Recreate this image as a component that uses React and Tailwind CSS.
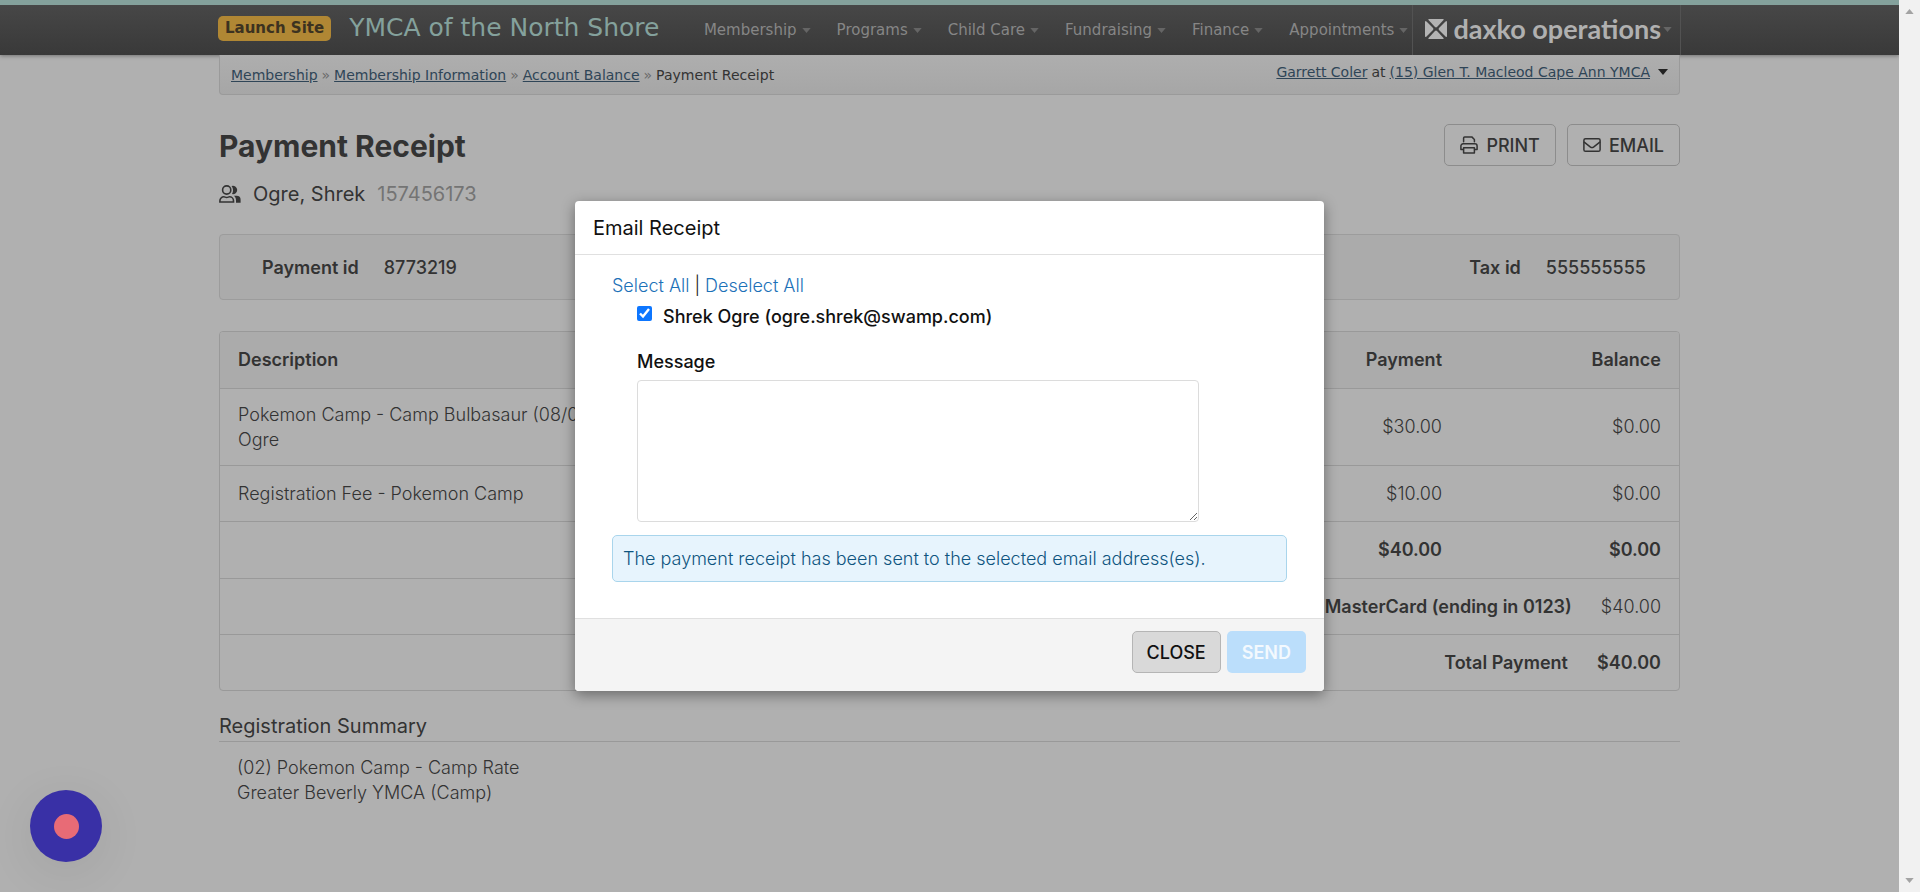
import React from "react";

const NAV = ["Membership", "Programs", "Child Care", "Fundraising", "Finance", "Appointments"];
const CRUMBS = ["Membership", "Membership Information", "Account Balance"];

function Caret({ className }) {
  return (
    <svg viewBox="0 0 10 6" className={className} aria-hidden="true">
      <path d="M0 0h10L5 6z" fill="currentColor" />
    </svg>
  );
}

function DaxkoMark() {
  return (
    <svg viewBox="0 0 22 20" className="h-5 w-[22px] shrink-0" fill="#b3b3b3" aria-hidden="true">
      <path d="M4 0h14q1.200 0 .5 1L12 8q-1 .9-2 0L3.500 1Q2.800 0 4 0z" />
      <path d="M4 20h14q1.200 0 .5-1L12 12q-1-.9-2 0l-6.500 7q-.7 1 .5 1z" />
      <path d="M0 3.200Q0 1.200 1.500 2.600L8 9q.9 1 0 2l-6.500 6.400Q0 18.800 0 16.800z" />
      <path d="M22 3.200q0-2-1.500-.6L14 9q-.9 1 0 2l6.500 6.400q1.500 1.400 1.500-.6z" />
    </svg>
  );
}

function PrintIcon() {
  return (
    <svg viewBox="0 0 18 18" className="size-[18px]" fill="none" stroke="currentColor" strokeWidth="1.500" strokeLinejoin="round" strokeLinecap="round" aria-hidden="true">
      <path d="M3.600 5.800V1.900a1 1 0 0 1 1-1h7.200l2.600 2.600v2.300" />
      <path d="M3.400 13.500H.9V10a2.200 2.200 0 0 1 2.200-2.200h11.800a2.200 2.200 0 0 1 2.200 2.200v3.500h-2.500" />
      <path d="M3.600 11.800h10.800v5.300H3.600z" />
    </svg>
  );
}

function EnvelopeIcon() {
  return (
    <svg viewBox="0 0 18 18" className="size-[18px]" fill="none" stroke="currentColor" strokeWidth="1.500" strokeLinejoin="round" strokeLinecap="round" aria-hidden="true">
      <rect x=".9" y="2.700" width="16.200" height="12.600" rx="1.600" />
      <path d="M1.200 6.200l6.300 4.900q1.500 1 3 0l6.300-4.900" />
    </svg>
  );
}

function PeopleIcon() {
  return (
    <svg viewBox="0 0 22 18" className="h-[18px] w-[22px]" aria-hidden="true">
      <circle cx="7.700" cy="5" r="4.100" fill="none" stroke="currentColor" strokeWidth="1.600" />
      <path d="M.9 17v-1.200a4 4 0 0 1 4-4c1 0 1.500.7 2.800.7s1.800-.7 2.800-.7a4 4 0 0 1 4 4V17z" fill="none" stroke="currentColor" strokeWidth="1.600" />
      <path d="M12.500 1a4.200 4.200 0 1 1 .5 8c1.500-2.400 1.300-5.700-.5-8zM15 10.800h2.600a4 4 0 0 1 4 4v3h-4.600v-2.200c0-2-.7-3.700-2-4.800z" fill="currentColor" />
    </svg>
  );
}

function Header() {
  return (
    <header className="border-t-[5px] border-[#84a19c] bg-linear-to-b from-[#474747] to-[#393939] font-['DejaVu_Sans',sans-serif] shadow-[0_1px_4px_rgba(0,0,0,0.35)]">
      <div className="mx-auto flex h-[50px] w-full max-w-[1463px] items-stretch justify-between">
        <div className="flex items-center pb-1">
          <a href="#launch" className="rounded-[5px] bg-[#b08734] px-[7px] text-[15px] leading-[25px] font-bold text-[#3c3220]">
            Launch Site
          </a>
          <span className="ml-[18px] text-[25px] leading-8 text-[#84a19c]">YMCA of the North Shore</span>
        </div>
        <div className="flex items-stretch">
          <nav className="flex items-center text-[15px] text-[#868686]">
            {NAV.map((n) => (
              <a key={n} href={"#" + n} className="flex items-center gap-[5px] pr-1 pl-[22px] first:pl-0">
                {n}
                <Caret className="h-[5px] w-[9px] text-[#656565]" />
              </a>
            ))}
          </nav>
          <a href="#operations" className="flex items-center border-x border-[#525252] pr-2 pb-[2px] pl-3 font-[Lato,sans-serif] text-[27px] font-bold text-[#b0b0b0]">
            <DaxkoMark />
            <span className="ml-[6px] leading-8">daxko operations</span>
            <Caret className="ml-[2px] h-[5px] w-[9px] text-[#656565]" />
          </a>
        </div>
      </div>
    </header>
  );
}

function CrumbBar() {
  return (
    <div className="flex h-10 items-start justify-between rounded-b-[4px] border border-t-0 border-[#9a9a9a] bg-linear-to-b from-[#aeaeae] to-[#a6a6a6] px-[11px] font-['DejaVu_Sans',sans-serif] text-[14px] leading-5 text-[#333]">
      <nav aria-label="Breadcrumb" className="flex gap-1 pt-[10px]">
        {CRUMBS.map((c) => (
          <React.Fragment key={c}>
            <a href={"#" + c} className="text-[#2f4557] underline">{c}</a>
            <span className="text-[#6a6a6a]">»</span>
          </React.Fragment>
        ))}
        <span>Payment Receipt</span>
      </nav>
      <div className="flex items-center gap-1 pt-[7px]">
        <a href="#user" className="text-[#2f4557] underline">Garrett Coler</a>
        <span>at</span>
        <a href="#branch" className="text-[#2f4557] underline">(15) Glen T. Macleod Cape Ann YMCA</a>
        <Caret className="ml-1 h-[6px] w-[10px] text-[#222]" />
      </div>
    </div>
  );
}

function ToolButton({ icon, children }) {
  return (
    <button type="button" className="flex h-[42px] items-center gap-2 rounded-[5px] border border-[#8c8c8c] px-[15px] text-[18px] font-medium text-[#333]">
      {icon}
      {children}
    </button>
  );
}

function Receipt() {
  return (
    <main className="text-[18px] leading-[25px] text-[#333]">
      <div className="flex items-start justify-between pt-[29px]">
        <div>
          <h1 className="text-[30px] leading-[44px] font-bold">Payment Receipt</h1>
          <div className="mt-3 flex items-center text-[20px] leading-7">
            <PeopleIcon />
            <span className="ml-3">Ogre, Shrek</span>
            <span className="ml-3 text-[#747474]">157456173</span>
          </div>
        </div>
        <div className="flex gap-[11px]">
          <ToolButton icon={<PrintIcon />}>PRINT</ToolButton>
          <ToolButton icon={<EnvelopeIcon />}>EMAIL</ToolButton>
        </div>
      </div>

      <dl className="mt-[26px] flex h-[66px] items-center justify-between rounded-[4px] border border-[#9c9c9c] bg-[#ababab] pr-[33px] pl-[42px]">
        <div className="flex gap-[25px]">
          <dt className="font-semibold">Payment id</dt>
          <dd className="font-medium">8773219</dd>
        </div>
        <div className="flex gap-[25px]">
          <dt className="font-semibold">Tax id</dt>
          <dd className="font-medium">555555555</dd>
        </div>
      </dl>

      <div className="mt-[31px] overflow-hidden rounded-[4px] border border-[#999]">
        <table className="w-full border-collapse font-light [&_td]:px-[18px] [&_th]:px-[18px] [&_tbody_tr]:border-t [&_tbody_tr]:border-[#999]">
          <thead className="bg-[#ababab]">
            <tr className="h-[56px]">
              <th className="text-left font-semibold">Description</th>
              <th className="w-[220px] text-right font-semibold">Payment</th>
              <th className="w-[219px] text-right font-semibold">Balance</th>
            </tr>
          </thead>
          <tbody>
            <tr className="h-[77px]">
              <td>Pokemon Camp - Camp Bulbasaur (08/08/2022)<br />Ogre</td>
              <td className="text-right">$30.00</td>
              <td className="text-right">$0.00</td>
            </tr>
            <tr className="h-[56px]">
              <td>Registration Fee - Pokemon Camp</td>
              <td className="text-right">$10.00</td>
              <td className="text-right">$0.00</td>
            </tr>
            <tr className="h-[57px] font-semibold">
              <td></td>
              <td className="text-right">$40.00</td>
              <td className="text-right">$0.00</td>
            </tr>
            <tr className="h-[56px]">
              <td colSpan={3}>
                <div className="flex justify-end gap-[29px]">
                  <span className="font-semibold">MasterCard (ending in 0123)</span>
                  <span>$40.00</span>
                </div>
              </td>
            </tr>
            <tr className="h-[56px] font-semibold">
              <td colSpan={3}>
                <div className="flex justify-end gap-[29px]">
                  <span>Total Payment</span>
                  <span>$40.00</span>
                </div>
              </td>
            </tr>
          </tbody>
        </table>
      </div>

      <section>
        <h2 className="mt-[21px] border-b border-[#999] pb-px text-[20px] leading-7">Registration Summary</h2>
        <p className="mt-[13px] pl-[18px] font-light">
          (02) Pokemon Camp - Camp Rate<br />Greater Beverly YMCA (Camp)
        </p>
      </section>
    </main>
  );
}

function EmailDialog() {
  return (
    <div className="absolute inset-0 flex items-start justify-center pt-[201px]">
      <form role="dialog" aria-labelledby="dialog-title" className="w-[749px] overflow-hidden rounded-[4px] bg-white text-[18px] leading-[25px] text-[#111] shadow-[0_4px_14px_rgba(0,0,0,0.4)]">
        <h2 id="dialog-title" className="border-b border-[#e0e0e0] px-[18px] pt-[13px] pb-3 text-[20px] leading-7">Email Receipt</h2>
        <div className="px-[37px] pt-[18px] pb-[36px]">
          <div className="flex gap-[5px] font-light">
            <a href="#all" className="text-[#1c71b8]">Select All</a>
            <span>|</span>
            <a href="#none" className="text-[#1c71b8]">Deselect All</a>
          </div>
          <div className="pr-[88px] pl-[25px] font-medium">
            <div className="mt-[6px] flex gap-[11px]">
              <input id="recipient" type="checkbox" defaultChecked className="mt-[2px] size-[15px] accent-[#0d76ff]" />
              <label htmlFor="recipient">Shrek Ogre (ogre.shrek@swamp.com)</label>
            </div>
            <label htmlFor="message" className="mt-5 block">Message</label>
            <textarea id="message" className="mt-[6px] block h-[142px] w-full resize rounded-[4px] border border-[#dcdcdc] bg-white" />
          </div>
          <div role="status" className="mt-[13px] rounded-[5px] border border-[#a9d5ec] bg-[#e7f4fd] p-[10px] font-light text-[#0f5580]">
            The payment receipt has been sent to the selected email address(es).
          </div>
        </div>
        <div className="flex justify-end gap-[6px] border-t border-[#e0e0e0] bg-[#f4f4f4] px-[18px] pt-3 pb-[18px]">
          <button type="button" className="h-[42px] rounded-[5px] border border-[#b5b5b5] bg-[#d9d9d9] px-[14px] font-medium">CLOSE</button>
          <button type="submit" disabled className="h-[42px] rounded-[5px] bg-[#bbdefb] px-[15px] font-semibold text-[#f3f9fe]">SEND</button>
        </div>
      </form>
    </div>
  );
}

export default function App() {
  return (
    <div className="flex h-screen overflow-hidden bg-[#f1f1f1] font-[Inter,sans-serif]">
      <div className="relative flex-1 overflow-hidden bg-[#b0b0b0]">
        <Header />
        <div className="mx-auto w-full max-w-[1461px]">
          <CrumbBar />
          <Receipt />
        </div>
        <EmailDialog />
        <button type="button" aria-label="Record" className="absolute bottom-[30px] left-[30px] flex size-[72px] items-center justify-center rounded-full bg-[#3930a6] shadow-[0_10px_50px_rgba(0,0,0,0.08)]">
          <span className="size-[25px] rounded-full bg-[#e86b76]" />
        </button>
      </div>
      <div aria-hidden="true" className="flex w-[21px] flex-col items-center justify-between py-[9px] text-[#a3a3a3]">
        <Caret className="h-[5px] w-[9px] rotate-180" />
        <Caret className="h-[5px] w-[9px]" />
      </div>
    </div>
  );
}
